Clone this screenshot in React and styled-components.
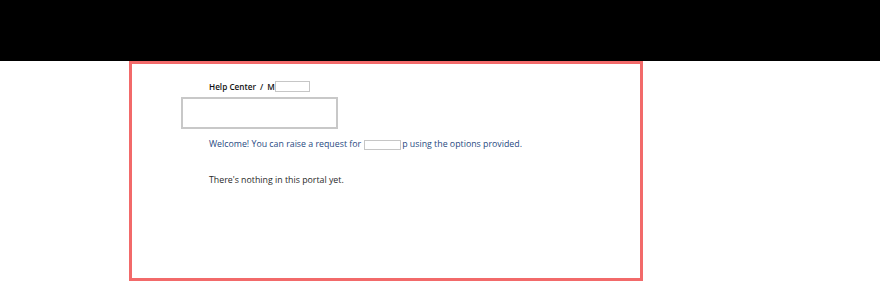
import React from "react";
import styled, { createGlobalStyle } from "styled-components";

const GlobalStyle = createGlobalStyle`
  html, body {
    margin: 0;
    padding: 0;
    background: #ffffff;
  }
  body {
    font-family: "Open Sans", "Liberation Sans", Arial, sans-serif;
  }
`;

export default function App() {
  return (
    <>
      <GlobalStyle />
      <TopBar />
      <PortalFrame>
        <Content>
          <Breadcrumbs>
            <span>Help Center</span>
            <Slash>/</Slash>
            <span>M</span>
            <Redacted $w={35} $h={11} />
          </Breadcrumbs>
          <LogoBox />
          <Welcome>
            Welcome! You can raise a request for
            <Redacted $w={37} $h={10} $inline />
            p using the options provided.
          </Welcome>
          <Empty>There's nothing in this portal yet.</Empty>
        </Content>
      </PortalFrame>
    </>
  );
}

const TopBar = styled.div`
  height: 61px;
  background: #000000;
`;

const PortalFrame = styled.div`
  box-sizing: border-box;
  margin-left: 129px;
  width: 514px;
  height: 220px;
  border: 3px solid #f26a6a;
  background: #ffffff;
`;

const Content = styled.div`
  display: flex;
  flex-direction: column;
  padding: 15px 0 0 77px;
`;

const Breadcrumbs = styled.div`
  display: flex;
  align-items: center;
  height: 14px;
  font-size: 8.2px;
  font-weight: 600;
  color: #111111;
`;

const Slash = styled.span`
  margin: 0 4px;
`;

const Redacted = styled.span`
  display: inline-block;
  box-sizing: border-box;
  width: ${(p) => p.$w}px;
  height: ${(p) => p.$h}px;
  border: 1.5px solid #c6c6c6;
  background: #ffffff;
  vertical-align: middle;
  margin: ${(p) => (p.$inline ? "0 1px 0 3px" : "0")};
`;

const LogoBox = styled.div`
  box-sizing: border-box;
  width: 157px;
  height: 32px;
  margin: 4px 0 0 -28px;
  border: 2px solid #c8c8c8;
`;

const Welcome = styled.p`
  margin: 8px 0 0;
  font-size: 8.8px;
  line-height: 14px;
  color: #284a82;
`;

const Empty = styled.p`
  margin: 22px 0 0;
  font-size: 8.8px;
  line-height: 14px;
  color: #2a2a2a;
`;
